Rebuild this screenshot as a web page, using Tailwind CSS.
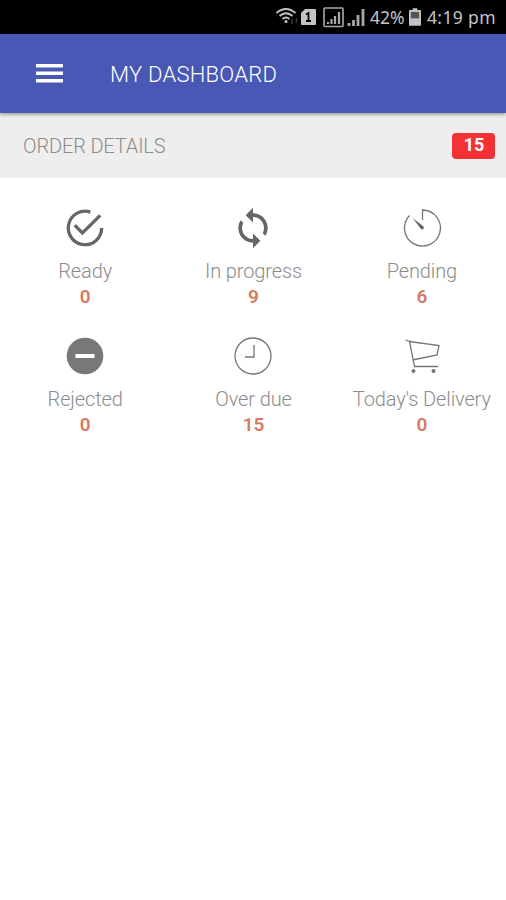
<!DOCTYPE html>
<html lang="en">

<head>
  <meta charset="UTF-8" />
  <meta name="viewport" content="width=device-width, initial-scale=1.0" />
  <title>My Dashboard</title>
  <script src="https://cdn.jsdelivr.net/npm/@tailwindcss/browser@4"></script>
</head>

<body class="bg-white min-h-screen overflow-hidden font-['Roboto',sans-serif]">
  <!-- Status bar -->
  <div class="bg-black h-[34px] flex items-center justify-end pr-[10px] text-[#c4c4c4] font-['Noto_Sans',sans-serif] text-[17.5px]">
    <svg class="w-[23px] h-5 mr-[2px]" viewBox="0 0 23 20" fill="none" stroke="currentColor" stroke-width="1.700">
      <path d="M0.500 6Q10 -2 19.500 6M3.500 9Q10 3.500 16.500 9M6.500 12Q10 9 13.500 12" />
      <circle cx="10" cy="14.500" r="1.500" fill="currentColor" stroke="none" />
      <path d="M16 12v5M20.500 11v5" stroke="#333" />
    </svg>
    <svg class="w-[15px] h-[18px] mr-[7px]" viewBox="0 0 15 18">
      <path d="M4 1H14Q15 1 15 2V16Q15 17 14 17H1Q0 17 0 16V5z" fill="currentColor" />
      <path d="M5 6.500L7.500 5V13M5 13H10" fill="none" stroke="#000" stroke-width="1.800" />
    </svg>
    <svg class="w-[21px] h-[21px] mr-[3px]" viewBox="0 0 21 21" fill="none" stroke="#a8a8a8">
      <rect x="1" y="1" width="19" height="18.500" rx="1" stroke-width="1.600" />
      <path d="M5 17v-2M8.500 17v-5M12 17V9M16 17V5" stroke-width="2.200" />
    </svg>
    <svg class="w-[18px] h-[19px] mr-[5px]" viewBox="0 0 18 19" fill="none" stroke="#a8a8a8" stroke-width="2.800">
      <path d="M2 18v-3M6.500 18v-6M11 18V7M16 18V1" />
    </svg>
    <span class="w-[39px] whitespace-nowrap">42%</span>
    <svg class="w-[12px] h-[18px] mr-[6px]" viewBox="0 0 13 19">
      <path d="M4 0h5v2h3q1 0 1 1v15q0 1-1 1H1q-1 0-1-1V3q0-1 1-1h3z" fill="currentColor" />
      <path d="M2 4h9v7H2z" fill="#555" />
    </svg>
    <span class="w-[69px] whitespace-nowrap tracking-[0.35px]">4:19 pm</span>
  </div>

  <!-- App bar -->
  <header class="relative bg-[#4858b4] h-[79px] flex items-center pl-9 shadow-[0_1px_4px_rgba(0,0,0,0.45)]">
    <svg class="w-[27px] h-[19px] mr-[47px]" viewBox="0 0 27 19" fill="#fff">
      <path d="M0 0h27v3.500H0zM0 7.500h27V11H0zM0 15h27v3.500H0z" />
    </svg>
    <h1 class="pt-[2px] text-white font-light text-[22px] leading-7 tracking-[0.25px] whitespace-nowrap">MY DASHBOARD</h1>
  </header>

  <!-- Section title -->
  <div class="bg-[#eeeeee] h-[65px] flex items-center justify-between pl-[23px] pr-[11px]">
    <h2 class="text-[#8c8c8c] font-light text-[20px] leading-6 tracking-[-0.15px] whitespace-nowrap">ORDER DETAILS</h2>
    <span class="w-[43px] h-[26px] rounded bg-[#f43135] text-white font-bold text-[18px] leading-[24px] text-center pl-px">15</span>
  </div>

  <!-- Order counters -->
  <main class="grid grid-cols-3 pt-7 pl-px text-center text-[20px] font-light tracking-[-0.12px] text-[#8c8c8c]">
    <div class="h-32 flex flex-col items-center">
      <svg class="w-11 h-11" viewBox="0 0 24 24" fill="none" stroke="#666" stroke-width="1.800">
        <path d="M14.900 3.350A9.100 9.100 0 1 0 21.100 12M6.400 10.500l4.200 4.200L20.300 5.100" />
      </svg>
      <p class="mt-[9px] leading-6 whitespace-nowrap">Ready</p>
      <p class="mt-[2px] leading-6 text-[19px] font-semibold text-[#d67a63]">0</p>
    </div>
    <div class="h-32 flex flex-col items-center">
      <svg class="w-11 h-11" viewBox="0 0 24 24" fill="#666">
        <path d="M12 4V1L8 5l4 4V6c3.310 0 6 2.690 6 6 0 1.010-.25 1.970-.7 2.800l1.460 1.460C19.540 15.030 20 13.570 20 12c0-4.420-3.580-8-8-8zm0 14c-3.310 0-6-2.690-6-6 0-1.010.25-1.970.7-2.800L5.240 7.740C4.460 8.970 4 10.430 4 12c0 4.420 3.580 8 8 8v3l4-4-4-4v3z" />
      </svg>
      <p class="mt-[9px] leading-6 whitespace-nowrap">In progress</p>
      <p class="mt-[2px] leading-6 text-[19px] font-semibold text-[#d67a63]">9</p>
    </div>
    <div class="h-32 flex flex-col items-center">
      <svg class="w-11 h-11" viewBox="0 0 44 44" fill="none" stroke="#757575" stroke-width="1.300">
        <path d="M22.500 14V4A18 18 0 1 1 9.500 9.500" />
        <path d="M12.500 12L23.500 20.500Q24.500 23.500 21.500 23.500z" fill="#626262" stroke="none" />
      </svg>
      <p class="mt-[9px] leading-6 whitespace-nowrap">Pending</p>
      <p class="mt-[2px] leading-6 text-[19px] font-semibold text-[#d67a63]">6</p>
    </div>
    <div class="h-32 flex flex-col items-center">
      <svg class="w-11 h-11" viewBox="0 0 44 44">
        <circle cx="22" cy="22" r="18.300" fill="#797877" />
        <path d="M12.500 20h19v4h-19z" fill="#fff" />
      </svg>
      <p class="mt-[9px] leading-6 whitespace-nowrap">Rejected</p>
      <p class="mt-[2px] leading-6 text-[19px] font-semibold text-[#d67a63]">0</p>
    </div>
    <div class="h-32 flex flex-col items-center">
      <svg class="w-11 h-11" viewBox="0 0 44 44" fill="none" stroke="#757575" stroke-width="1.300">
        <circle cx="22" cy="22" r="18" />
        <path d="M23 11v12h-9" />
      </svg>
      <p class="mt-[9px] leading-6 whitespace-nowrap">Over due</p>
      <p class="mt-[2px] leading-6 text-[19px] font-semibold text-[#d67a63]">15</p>
    </div>
    <div class="h-32 flex flex-col items-center">
      <svg class="w-11 h-11" viewBox="0 0 44 44" fill="none" stroke="#757575" stroke-width="1.300">
        <path d="M5.500 6l4 1.500 5 25h23.500M9.500 7.500l29.500 4-2 9.500-24.500 5" />
        <circle cx="13.500" cy="37" r="2" fill="#757575" stroke="none" />
        <circle cx="33.500" cy="37" r="2" fill="#757575" stroke="none" />
      </svg>
      <p class="mt-[9px] leading-6 whitespace-nowrap">Today's Delivery</p>
      <p class="mt-[2px] leading-6 text-[19px] font-semibold text-[#d67a63]">0</p>
    </div>
  </main>
</body>

</html>
